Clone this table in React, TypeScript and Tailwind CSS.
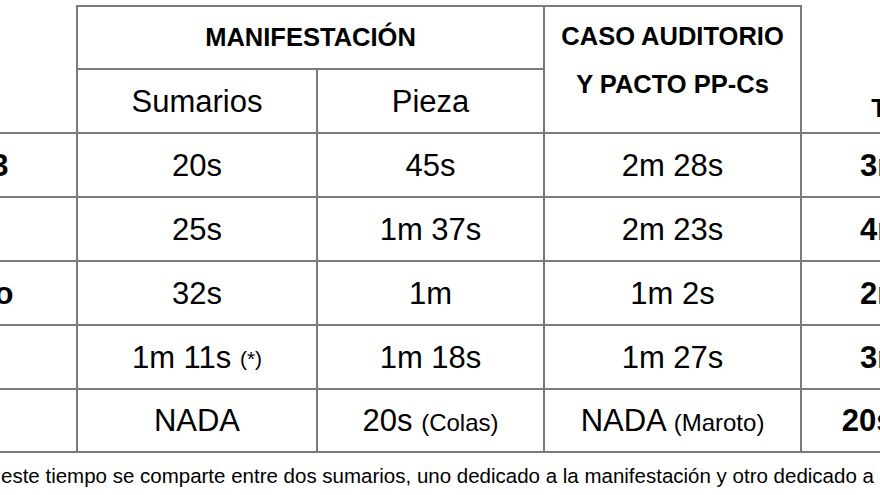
import React from "react";

const B = "border-[#7a7a7a]";

type Row = {
  label: string;
  a: React.ReactNode;
  b: React.ReactNode;
  c: React.ReactNode;
  t: React.ReactNode;
};

const Small = ({ children }: { children: React.ReactNode }) => (
  <span className="text-[24px]">{children}</span>
);

const rows: Row[] = [
  { label: "Antena 3", a: "20s", b: "45s", c: "2m 28s", t: "3m 33s" },
  { label: "La 1", a: "25s", b: "1m 37s", c: "2m 23s", t: "4m 25s" },
  { label: "Telecinco", a: "32s", b: "1m", c: "1m 2s", t: "2m 34s" },
  {
    label: "Cuatro",
    a: (
      <>
        1m 11s <span className="text-[21px] align-[2px]">(*)</span>
      </>
    ),
    b: "1m 18s",
    c: "1m 27s",
    t: "3m 56s",
  },
  {
    label: "laSexta",
    a: "NADA",
    b: (
      <>
        20s <Small>(Colas)</Small>
      </>
    ),
    c: (
      <>
        NADA <Small>(Maroto)</Small>
      </>
    ),
    t: (
      <>
        20s <Small>(Colas)</Small>
      </>
    ),
  },
];

export default function App() {
  return (
    <div className="w-[880px] h-[495px] overflow-hidden bg-white text-black font-['Liberation_Sans',Arial,sans-serif]">
      <table className="border-collapse table-fixed w-[1213px] ml-[-190px] mt-[5px]">
        <colgroup>
          <col className="w-[267px]" />
          <col className="w-[240px]" />
          <col className="w-[227px]" />
          <col className="w-[257px]" />
          <col className="w-[222px]" />
        </colgroup>
        <thead>
          <tr className="h-[63px]">
            <th rowSpan={2} className={`border-b-2 border-r-2 ${B}`}></th>
            <th
              colSpan={2}
              className={`border-2 ${B} text-[25.5px] font-bold leading-none`}
            >
              MANIFESTACIÓN
            </th>
            <th
              rowSpan={2}
              className={`border-2 ${B} text-[25.5px] font-bold align-top pt-[5px] leading-[48px]`}
            >
              CASO AUDITORIO
              <br />Y PACTO PP-Cs
            </th>
            <th
              rowSpan={2}
              className={`border-b-2 border-l-2 ${B} text-[25.5px] font-bold align-top pt-[90px] leading-none`}
            >
              TOTAL
            </th>
          </tr>
          <tr className="h-[64px]">
            <th className={`border-2 ${B} text-[31px] font-normal leading-none`}>
              Sumarios
            </th>
            <th className={`border-2 ${B} text-[31px] font-normal leading-none`}>
              Pieza
            </th>
          </tr>
        </thead>
        <tbody>
          {rows.map((r, i) => (
            <tr key={i} className={i === 4 ? "h-[63px]" : "h-[64px]"}>
              <td
                className={`border-y-2 border-r-2 ${B} text-center text-[31px] font-bold leading-none`}
              >
                {r.label}
              </td>
              <td className={`border-2 ${B} text-center text-[31px] leading-none`}>
                {r.a}
              </td>
              <td className={`border-2 ${B} text-center text-[31px] leading-none`}>
                {r.b}
              </td>
              <td className={`border-2 ${B} text-center text-[31px] leading-none`}>
                {r.c}
              </td>
              <td
                className={`border-y-2 border-l-2 ${B} text-center text-[31px] font-bold leading-none`}
              >
                {r.t}
              </td>
            </tr>
          ))}
        </tbody>
      </table>
      <p className="mt-[11px] ml-[1px] whitespace-nowrap text-[20.5px] leading-[24px]">
        este tiempo se comparte entre dos sumarios, uno dedicado a la
        manifestación y otro dedicado a la pieza
      </p>
    </div>
  );
}
